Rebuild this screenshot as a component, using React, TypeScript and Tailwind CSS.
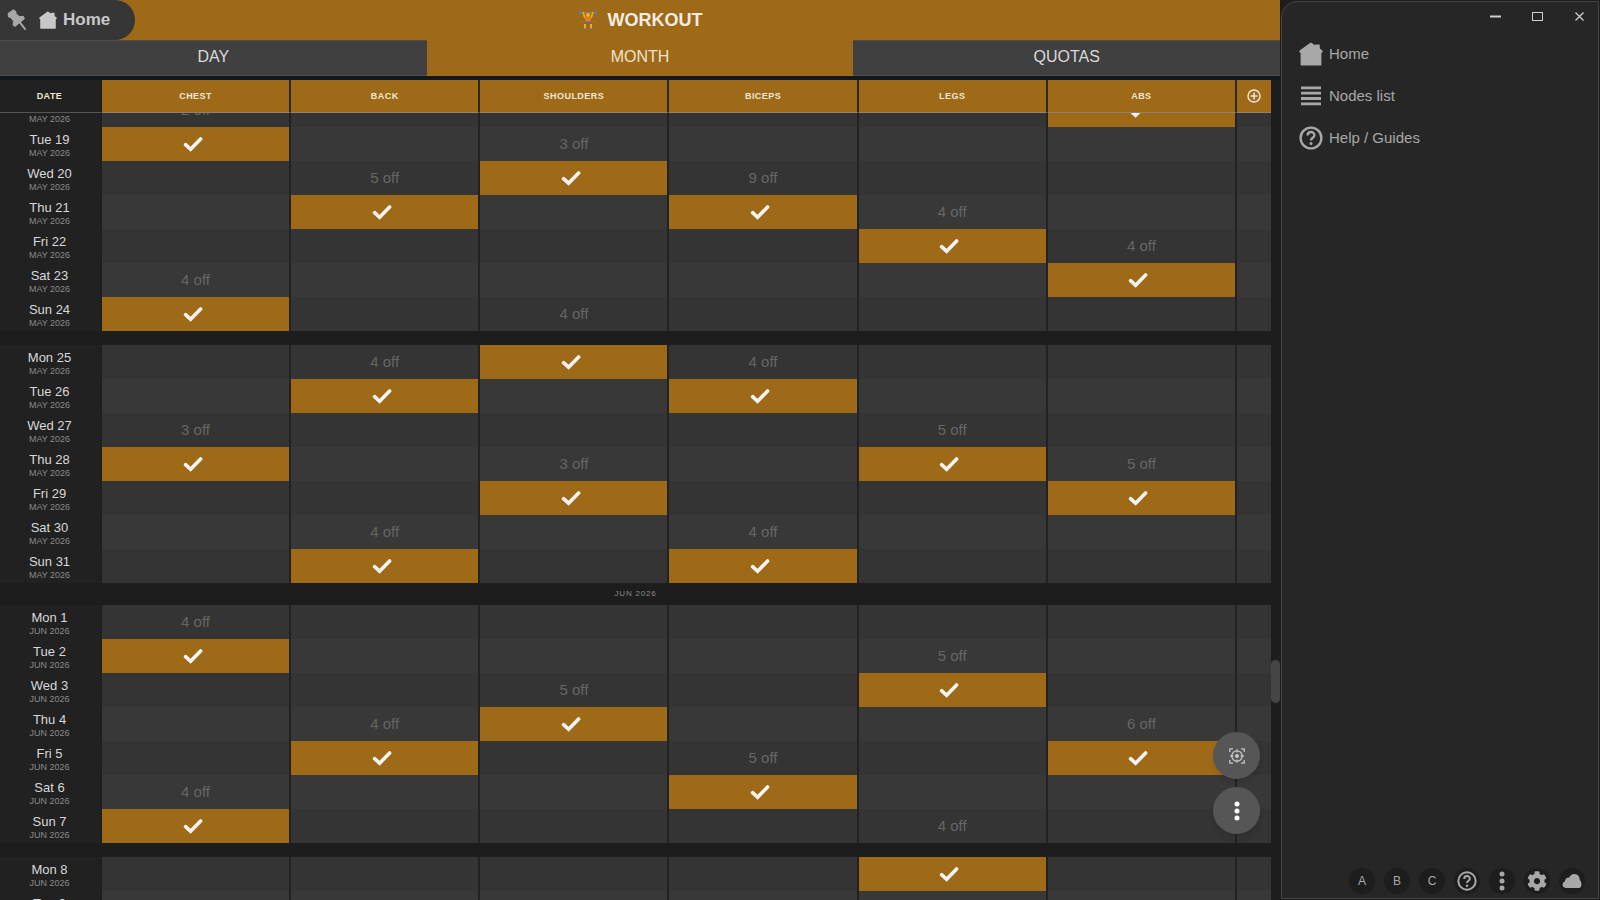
import { useLayoutEffect, useRef } from 'react'
import { FaCog } from 'react-icons/fa'

const GROUPS = ['Chest', 'Back', 'Shoulders', 'Biceps', 'Legs', 'Abs']

// x = trained that day, a number = days off before the next session
type Cell = 'x' | number | null

interface Day {
  name: string
  month: string
  cells: Cell[]
}

interface Week {
  label?: string
  days: Day[]
}

const _ = null

const WEEKS: Week[] = [
  {
    days: [
      { name: 'Mon 18', month: 'MAY 2026', cells: [2, _, _, _, _, 'x'] },
      { name: 'Tue 19', month: 'MAY 2026', cells: ['x', _, 3, _, _, _] },
      { name: 'Wed 20', month: 'MAY 2026', cells: [_, 5, 'x', 9, _, _] },
      { name: 'Thu 21', month: 'MAY 2026', cells: [_, 'x', _, 'x', 4, _] },
      { name: 'Fri 22', month: 'MAY 2026', cells: [_, _, _, _, 'x', 4] },
      { name: 'Sat 23', month: 'MAY 2026', cells: [4, _, _, _, _, 'x'] },
      { name: 'Sun 24', month: 'MAY 2026', cells: ['x', _, 4, _, _, _] },
    ],
  },
  {
    days: [
      { name: 'Mon 25', month: 'MAY 2026', cells: [_, 4, 'x', 4, _, _] },
      { name: 'Tue 26', month: 'MAY 2026', cells: [_, 'x', _, 'x', _, _] },
      { name: 'Wed 27', month: 'MAY 2026', cells: [3, _, _, _, 5, _] },
      { name: 'Thu 28', month: 'MAY 2026', cells: ['x', _, 3, _, 'x', 5] },
      { name: 'Fri 29', month: 'MAY 2026', cells: [_, _, 'x', _, _, 'x'] },
      { name: 'Sat 30', month: 'MAY 2026', cells: [_, 4, _, 4, _, _] },
      { name: 'Sun 31', month: 'MAY 2026', cells: [_, 'x', _, 'x', _, _] },
    ],
  },
  {
    label: 'JUN 2026',
    days: [
      { name: 'Mon 1', month: 'JUN 2026', cells: [4, _, _, _, _, _] },
      { name: 'Tue 2', month: 'JUN 2026', cells: ['x', _, _, _, 5, _] },
      { name: 'Wed 3', month: 'JUN 2026', cells: [_, _, 5, _, 'x', _] },
      { name: 'Thu 4', month: 'JUN 2026', cells: [_, 4, 'x', _, _, 6] },
      { name: 'Fri 5', month: 'JUN 2026', cells: [_, 'x', _, 5, _, 'x'] },
      { name: 'Sat 6', month: 'JUN 2026', cells: [4, _, _, 'x', _, _] },
      { name: 'Sun 7', month: 'JUN 2026', cells: ['x', _, _, _, 4, _] },
    ],
  },
  {
    days: [
      { name: 'Mon 8', month: 'JUN 2026', cells: [_, _, _, _, 'x', _] },
      { name: 'Tue 9', month: 'JUN 2026', cells: [_, _, _, _, _, _] },
    ],
  },
]

function PinIcon() {
  return (
    <svg width="20" height="22" viewBox="0 0 20 22" fill="#a8a8a8" stroke="#a8a8a8" strokeLinejoin="round">
      <path d="M1 4.5 L6.4 0.8 L9 2.6 L9 5 L12.6 7.6 L16.4 7.4 L17.4 9.8 L8 17.4 L6 16 L6.6 12.4 L4 8.6 L1.6 8 Z" />
      <path d="M13 13.6 L18 20" strokeWidth="2" strokeLinecap="round" />
    </svg>
  )
}

function HouseIcon({ className }: { className: string }) {
  return (
    <svg className={className} viewBox="0 0 24 24" fill="currentColor">
      <path d="M12 0.6 L16 3.3 V3 Q16 2.4 16.6 2.4 H20.2 Q20.8 2.4 20.8 3 V6.6 L23.4 8.6 Q24 9.4 23.4 10.2 Q22.9 10.9 22.4 10.9 V22.6 Q22.4 23.6 21.4 23.6 H2.6 Q1.6 23.6 1.6 22.6 V10.9 Q1.1 10.9 0.6 10.2 Q0 9.4 0.6 8.6 L11 1 Q11.5 0.6 12 0.6 Z" />
    </svg>
  )
}

function LifterIcon() {
  return (
    <svg width="20" height="21" viewBox="0 0 20 21" fill="none">
      <path d="M0.5 2.6 H19.5" stroke="#7d8790" strokeWidth="1" />
      <path d="M1.8 0.8 V4.6 M18.2 0.8 V4.6" stroke="#5d7f9c" strokeWidth="2" />
      <path d="M5.2 2.6 L6.4 6.8 L8 8 M14.8 2.6 L13.6 6.8 L12 8" stroke="#f2a71b" strokeWidth="1.8" strokeLinecap="round" />
      <circle cx="10" cy="5" r="2.1" fill="#f5b31f" />
      <path d="M7 7.2 H13 L12.6 12 H7.4 Z" fill="#ee7a1d" />
      <path d="M7.4 11.6 H12.6 L14 14 H11 L10 13 L9 14 H6 Z" fill="#6d6a78" />
      <path d="M7 14 L6.8 18.6 M13 14 L13.2 18.6" stroke="#f2b01e" strokeWidth="2" />
      <path d="M5 19.4 H7.8 M12.2 19.4 H15" stroke="#3f74a8" strokeWidth="1.4" />
    </svg>
  )
}

function CheckIcon() {
  return (
    <svg className="mx-auto block" width="20" height="16" viewBox="0 0 20 16" fill="none">
      <path d="M2.6 8.6 L7.6 13.2 L17.6 3" stroke="#f4f4f4" strokeWidth="3.6" strokeLinecap="round" />
    </svg>
  )
}

function HelpIcon({ className }: { className: string }) {
  return (
    <svg className={className} viewBox="0 0 24 24" fill="none" stroke="currentColor" strokeWidth="2.4">
      <circle cx="12" cy="12" r="10.4" />
      <path d="M8.6 9.6 C8.6 4.9 15.4 5 15.4 9.2 C15.4 11.7 12 11.7 12 14.4" />
      <circle cx="12" cy="17.6" r="1.5" fill="currentColor" stroke="none" />
    </svg>
  )
}

function ListIcon() {
  return (
    <svg className="mx-auto" width="20" height="20" viewBox="0 0 20 20" fill="currentColor">
      <path d="M0 0.5 H20 V3.3 H0 Z M0 5.8 H20 V8.6 H0 Z M0 11.1 H20 V13.9 H0 Z M0 16.4 H20 V19.2 H0 Z" />
    </svg>
  )
}

function DotsIcon({ className }: { className: string }) {
  return (
    <svg className={className} viewBox="0 0 6 20" fill="currentColor">
      <circle cx="3" cy="3" r="2.5" />
      <circle cx="3" cy="10" r="2.5" />
      <circle cx="3" cy="17" r="2.5" />
    </svg>
  )
}

function CloudIcon() {
  return (
    <svg width="20" height="16" viewBox="0 0 20 16" fill="currentColor">
      <path d="M4 15 Q0.5 14.8 0.5 11.6 Q0.6 8.8 3 8.2 Q3 4.4 7.2 4.4 Q8.8 1 12.6 1 Q17.6 1.6 17.8 6.8 Q19.4 8.6 19.5 11.4 Q19.4 15 16 15 Z" />
    </svg>
  )
}

function TargetIcon() {
  return (
    <svg width="16" height="16" viewBox="0 0 16 16" fill="none" stroke="#c4c4c4" strokeWidth="1.3">
      <path d="M0.8 4 V0.8 H4 M12 0.8 H15.2 V4 M15.2 12 V15.2 H12 M4 15.2 H0.8 V12" />
      <circle cx="8" cy="8" r="5.2" />
      <circle cx="8" cy="8" r="1.4" fill="#c4c4c4" />
      <path d="M8 1.2 V4.4 M8 11.6 V14.8 M1.2 8 H4.4 M11.6 8 H14.8" />
    </svg>
  )
}

function AddIcon() {
  return (
    <svg className="mx-auto" width="14" height="14" viewBox="0 0 14 14" fill="none" stroke="#f0e6d6" strokeWidth="1.5">
      <circle cx="7" cy="7" r="6" />
      <path d="M7 3.5 V10.5 M3.5 7 H10.5" />
    </svg>
  )
}

function DayRow({ day, dark }: { day: Day; dark: boolean }) {
  const shade = dark ? 'bg-[#343434]' : 'bg-[#383838]'
  return (
    <tr className="h-[34px]">
      <th scope="row" className="p-0 pt-px pr-0.5 font-normal bg-[#212121] border-r border-[#1c1c1c]">
        <span className="block text-[13px] leading-4 text-[#d8d8d8]">{day.name}</span>
        <span className="block text-[9px] leading-[10px] text-[#8a8a8a]">{day.month}</span>
      </th>
      {day.cells.map((cell, i) => (
        <td
          key={GROUPS[i]}
          className={`p-0 border-r-2 border-[#222222] text-center text-[15px] leading-5 text-[#666666] ${cell === 'x' ? 'bg-[#9e6a17] pr-1.5' : shade}`}
        >
          {cell === 'x' ? <CheckIcon /> : cell !== null && `${cell} off`}
        </td>
      ))}
      <td className={`p-0 ${shade}`} />
    </tr>
  )
}

function Planner() {
  const scroller = useRef<HTMLDivElement>(null)

  useLayoutEffect(() => {
    if (scroller.current) scroller.current.scrollTop = 20
  }, [])

  return (
    <div className="relative flex-1 min-h-0 border-t-4 border-[#15181b]">
      <div ref={scroller} className="h-full overflow-hidden pr-[9px]">
        <table className="w-full table-fixed border-separate border-spacing-0">
          <colgroup>
            <col className="w-[102px]" />
            {GROUPS.map((g) => <col key={g} />)}
            <col className="w-[34px]" />
          </colgroup>
          <thead className="text-[9px] tracking-wider text-[#f0e6d6]">
            <tr className="h-[33px]">
              <th className="sticky top-0 p-0 pt-0.5 pr-0.5 bg-[#212121] border-b border-[#555555] border-r border-r-[#1c1c1c]">DATE</th>
              {GROUPS.map((g) => (
                <th key={g} className="sticky top-0 p-0 pt-0.5 bg-[#9e6a17] border-b border-b-[#8c8278] border-r-2 border-r-[#2d2a26] uppercase">
                  {g}
                </th>
              ))}
              <th className="sticky top-0 p-0 bg-[#9e6a17] border-b border-[#8c8278]">
                <button aria-label="Add group" className="block w-full"><AddIcon /></button>
              </th>
            </tr>
          </thead>
          {WEEKS.map((week, w) => (
            <tbody key={w}>
              {w > 0 && (
                <tr className={week.label ? 'h-[22px]' : 'h-[14px]'}>
                  <td colSpan={8} className="p-0 text-center text-[8px] leading-[10px] tracking-widest text-[#8a8a8a]">
                    {week.label}
                  </td>
                </tr>
              )}
              {week.days.map((day, d) => <DayRow key={day.name} day={day} dark={d % 2 === 0} />)}
            </tbody>
          ))}
        </table>
      </div>

      {/* Scroll thumb */}
      <div className="absolute right-0 top-[580px] w-[9px] h-[43px] rounded-full bg-[#454545]" />

      {/* Floating actions */}
      <div className="absolute right-5 bottom-[66px] flex flex-col gap-2">
        <button aria-label="Go to today" className="size-[47px] rounded-full bg-[#565656] shadow-md flex items-center justify-center">
          <TargetIcon />
        </button>
        <button aria-label="More actions" className="size-[47px] rounded-full bg-[#565656] shadow-md flex items-center justify-center text-white">
          <DotsIcon className="w-[6px] h-5" />
        </button>
      </div>
    </div>
  )
}

const TABS = ['DAY', 'MONTH', 'QUOTAS']

function Main() {
  return (
    <main className="flex-1 min-w-0 flex flex-col">
      <header className="relative h-10 shrink-0 bg-[#9e6a17] flex items-center justify-center">
        <nav className="absolute left-0 top-0 h-10 w-[135px] rounded-r-full bg-[#363636] flex items-center pl-[7px]">
          <button aria-label="Pin"><PinIcon /></button>
          <a href="#home" className="flex items-center gap-[6px] ml-3 text-[17px] font-bold text-[#c8c8c8]">
            <HouseIcon className="size-[18px]" />
            Home
          </a>
        </nav>
        <h1 className="flex items-center gap-[10px] text-[18px] font-bold text-[#f2ede4]">
          <LifterIcon />
          WORKOUT
        </h1>
      </header>

      <div className="grid grid-cols-3 h-9 shrink-0">
        {TABS.map((tab) => (
          <button
            key={tab}
            className={`text-[16px] leading-5 pb-0.5 border-y ${tab === 'MONTH' ? 'bg-[#9e6a17] border-[#9e6a17] text-[#ece4d6]' : 'bg-[#404040] border-[#505050] text-[#dadada]'}`}
          >
            {tab}
          </button>
        ))}
      </div>

      <Planner />
    </main>
  )
}

const ROUND = 'size-[26px] rounded-full bg-[#1d1d1d] flex items-center justify-center'

function SidePanel() {
  return (
    <aside className="w-[318px] shrink-0 m-px flex flex-col justify-between rounded-tl-2xl border border-[#434343] bg-[#262626] text-[#a8a8a8]">
      <div>
        <div className="flex justify-end gap-[31px] pt-[9px] pr-[13px] text-[#d0d0d0]">
          <button aria-label="Minimize">
            <svg width="11" height="11" viewBox="0 0 11 11"><path d="M0 5.5 H11" stroke="currentColor" strokeWidth="2" /></svg>
          </button>
          <button aria-label="Maximize">
            <svg width="11" height="11" viewBox="0 0 11 11"><rect x="0.5" y="1.5" width="10" height="8" fill="none" stroke="currentColor" /></svg>
          </button>
          <button aria-label="Close">
            <svg width="11" height="11" viewBox="0 0 11 11"><path d="M1.5 1.5 L9.5 9.5 M9.5 1.5 L1.5 9.5" stroke="currentColor" strokeWidth="1.2" /></svg>
          </button>
        </div>
        <nav className="flex flex-col gap-[18px] mt-5 pl-[17px] text-[15px] leading-6">
          <a href="#home" className="flex items-center gap-[6px]"><HouseIcon className="size-6" />Home</a>
          <a href="#nodes" className="flex items-center gap-[6px]"><span className="w-6"><ListIcon /></span>Nodes list</a>
          <a href="#help" className="flex items-center gap-[6px]"><HelpIcon className="size-6" />Help / Guides</a>
        </nav>
      </div>

      <div className="flex justify-end gap-[9px] pr-[13px] pb-1">
        {['A', 'B', 'C'].map((slot) => (
          <button key={slot} className={`${ROUND} text-[12px]`}>{slot}</button>
        ))}
        <button aria-label="Help" className={ROUND}><HelpIcon className="size-5" /></button>
        <button aria-label="Menu" className={ROUND}><DotsIcon className="w-[6px] h-5" /></button>
        <button aria-label="Settings" className={ROUND}><FaCog size={20} /></button>
        <button aria-label="Cloud sync" className={ROUND}><CloudIcon /></button>
      </div>
    </aside>
  )
}

export default function App() {
  return (
    <div className="h-screen flex overflow-hidden bg-[#1d1d1d] font-['Liberation_Sans',Arial,sans-serif]">
      <Main />
      <SidePanel />
    </div>
  )
}
